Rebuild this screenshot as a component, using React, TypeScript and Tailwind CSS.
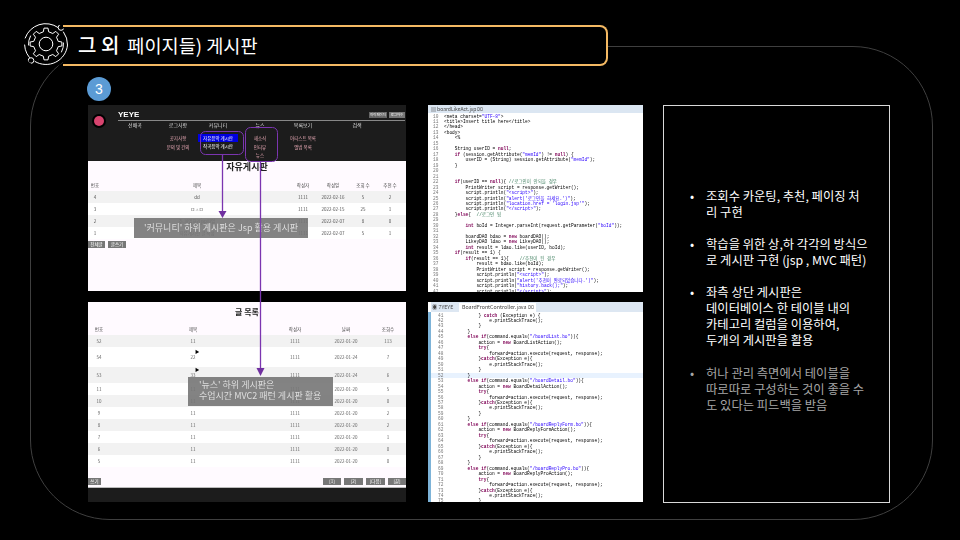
import React from 'react';

const code1: [string, string][] = [
  ['10', '<meta charset="UTF-8">'],
  ['11', '<title>Insert title here</title>'],
  ['12', '</head>'],
  ['13', '<body>'],
  ['14', '    <%'],
  ['15', ''],
  ['16', '    String userID = null;'],
  ['17', '    if (session.getAttribute("memId") != null) {'],
  ['18', '        userID = (String) session.getAttribute("memId");'],
  ['19', '    }'],
  ['20', ''],
  ['21', ''],
  ['22', '    if(userID == null){ //로그인이 안되을 경우'],
  ['23', '        PrintWriter script = response.getWriter();'],
  ['24', '        script.println("<script>");'],
  ['25', '        script.println("alert(\'로그인을 하세요.\')");'],
  ['26', '        script.println("location.href = \'login.jsp\'");'],
  ['27', '        script.println("</script>");'],
  ['28', '    }else{  //로그인 됨'],
  ['29', ''],
  ['30', '        int boId = Integer.parseInt(request.getParameter("boId"));'],
  ['31', ''],
  ['32', '        boardDAO bdao = new boardDAO();'],
  ['33', '        LikeyDAO ldao = new LikeyDAO();'],
  ['34', '        int result = ldao.like(userID, boId);'],
  ['35', '    if(result == 1) {'],
  ['36', '        if(result == 1){    //추천이 된 경우'],
  ['37', '            result = bdao.like(boId);'],
  ['38', '            PrintWriter script = response.getWriter();'],
  ['39', '            script.println("<script>");'],
  ['40', '            script.println("alert(\'추천이 완료되었습니다.\')");'],
  ['41', '            script.println("history.back();");'],
  ['42', '            script.println("</script>");'],
];

const blocks = [
  ['"/boardReplyForm.bo"', 'BoardReplyFormAction'],
  ['"/boardReplyPro.bo"', 'BoardReplyProAction'],
];

function tail(start: number): [string, string][] {
  const body = [
    '            try{',
    '                forward=action.execute(request, response);',
    '            }catch(Exception e){',
    '                e.printStackTrace();',
    '            }',
    '        }',
  ];
  return body.map((l, i) => [String(start + i), l]);
}

const code2: [string, string][] = [
  ['41', '            } catch (Exception e) {'],
  ['42', '                e.printStackTrace();'],
  ['43', '            }'],
  ['44', '        }'],
  ['45', '        else if(command.equals("/boardList.bo")){'],
  ['46', '            action = new BoardListAction();'],
  ...tail(47),
  ['53', '        else if(command.equals("/boardDetail.bo")){'],
  ['54', '            action = new BoardDetailAction();'],
  ...tail(55),
  ['61', `        else if(command.equals(${blocks[0][0]})){`],
  ['62', `            action = new ${blocks[0][1]}();`],
  ...tail(63),
  ['69', `        else if(command.equals(${blocks[1][0]})){`],
  ['70', `            action = new ${blocks[1][1]}();`],
  ...tail(71).slice(0, 4),
  ['75', '            }'],
];

// keywords, strings and comments get the Eclipse colours
function CodeText({ text }: { text: string }) {
  const parts = text.split(/(\/\/.*$|"[^"]*"|\b(?:new|if|else|try|catch|null|int)\b)/);
  return (
    <>
      {parts.map((p, i) => {
        if (p.startsWith('//')) return <span key={i} className="text-[#3f7f5f]">{p}</span>;
        if (p.startsWith('"')) return <span key={i} className="text-[#2a00ff]">{p}</span>;
        if (/^(new|if|else|try|catch|null|int)$/.test(p)) return <span key={i} className="font-bold text-[#7f0055]">{p}</span>;
        return <span key={i}>{p}</span>;
      })}
    </>
  );
}

function CodeLines({ lines, gutter, active }: { lines: [string, string][]; gutter: string; active?: string }) {
  return (
    <div className="blur-[0.3px] font-['Liberation_Mono','Noto_Sans_CJK_KR',monospace] text-[4.5px] leading-[5.48px] text-black">
      {lines.map(([n, t]) => (
        <div key={n} className={`flex h-[5.48px] whitespace-pre ${n === active ? 'bg-[#e8f2fe]' : ''}`}>
          <span className={`${gutter} shrink-0 text-[#787878]`}>{n}</span>
          <span><CodeText text={t} /></span>
        </div>
      ))}
    </div>
  );
}

function gearPath(cx: number, cy: number, outer: number, root: number, teeth: number) {
  const pts: string[] = [];
  const step = (Math.PI * 2) / teeth;
  for (let i = 0; i < teeth; i++) {
    const a = i * step - Math.PI / 2;
    const w = step * 0.2;
    const corners: [number, number][] = [
      [root, a - w * 1.35],
      [outer, a - w * 0.8],
      [outer, a + w * 0.8],
      [root, a + w * 1.35],
    ];
    corners.forEach(([r, t]) => {
      pts.push(`${(cx + r * Math.cos(t)).toFixed(2)} ${(cy + r * Math.sin(t)).toFixed(2)}`);
    });
  }
  return `M${pts.join('L')}Z`;
}

function GearLogo() {
  return (
    <svg width="48" height="48" viewBox="0 0 48 48" fill="none" stroke="#fff" strokeWidth="1" className="relative z-10 shrink-0 bg-black rounded-full">
      <path d={gearPath(24, 23, 16, 12.5, 8)} strokeLinejoin="round" />
      <circle cx="24" cy="23" r="6.8" />
      <path d="M36 6.5A21.5 21.5 0 0 0 3.2 17" strokeLinecap="round" />
      <path d="M2.6 24A21.5 21.5 0 0 0 10.5 39.5" strokeLinecap="round" />
      <path d="M13 40.5A21.5 21.5 0 0 0 45.5 24A21.5 21.5 0 0 0 41.5 11" strokeLinecap="round" />
      <path d="M6.5 24A17.5 17.5 0 0 1 8.5 15" strokeLinecap="round" />
      <path d="M41.5 22A17.5 17.5 0 0 1 39.5 31" strokeLinecap="round" />
      <circle cx="39" cy="6.5" r="2.8" fill="#000" />
      <circle cx="9" cy="39.5" r="2.8" fill="#000" />
    </svg>
  );
}

const freeRows = [
  ['4', 'dd', '1111', '2022-02-16', '5', '2'],
  ['3', 'ㅁㅅㅁ', '1111', '2022-02-15', '25', '1'],
  ['2', '추.파일처리jsp파일', '1111', '2022-02-07', '8', '0'],
  ['1', '자유게시판 글 작성', '1111', '2022-02-07', '5', '1'],
];

const listRows: { cells: string[]; h: string; tri?: boolean }[] = [
  { cells: ['52', '11', '1111', '2022-01-20', '113'], h: 'h-[12px]' },
  { cells: ['54', '22', '1111', '2022-01-24', '7'], h: 'h-[20px]', tri: true },
  { cells: ['53', '33', '1111', '2022-01-24', '6'], h: 'h-[16px]', tri: true },
  { cells: ['11', '11', '1111', '2022-01-20', '5'], h: 'h-[12px]' },
  { cells: ['10', '11', '1111', '2022-01-20', '0'], h: 'h-[12px]' },
  { cells: ['9', '11', '1111', '2022-01-20', '2'], h: 'h-[12px]' },
  { cells: ['8', '11', '1111', '2022-01-20', '2'], h: 'h-[12px]' },
  { cells: ['7', '11', '1111', '2022-01-20', '1'], h: 'h-[12px]' },
  { cells: ['6', '11', '1111', '2022-01-20', '0'], h: 'h-[12px]' },
  { cells: ['5', '11', '1111', '2022-01-20', '0'], h: 'h-[12px]' },
];

function FreeBoardShot() {
  return (
    <div className="h-[186px] overflow-hidden bg-[#fffaff]">
      <div className="blur-[0.45px]">
        <div className="h-[56px] bg-[#1c1c1c] flex flex-col text-white">
          <div className="h-[16px] flex items-end pl-[6px] pr-[1px]">
            <div className="w-[10px] h-[10px] rounded-full bg-[#d8446f] -mb-[5px] ring-2 ring-black shrink-0" />
            <div className="flex-1 ml-[14px] border-b border-[#888] flex justify-between items-end h-[12px]">
              <span className="text-[8px] leading-[10px] font-bold font-['Liberation_Sans',sans-serif]">YEYE</span>
              <div className="flex gap-[2px] mb-[2px]">
                <span className="w-[18px] h-[6px] bg-[#666] text-[3.4px] leading-[6px] text-center whitespace-nowrap">마이페이지</span>
                <span className="w-[16px] h-[6px] bg-[#777] text-[3.4px] leading-[6px] text-center whitespace-nowrap">로그아웃</span>
              </div>
            </div>
          </div>
          <div className="grid grid-cols-[34px_52px_28px_56px_30px_78px] ml-[30px] text-center whitespace-nowrap text-[5px] leading-[8px] text-[#ddd]">
            <span>선배곡</span>
            <span>로그사항</span>
            <span>커뮤니티</span>
            <span>뉴스</span>
            <span>목록보기</span>
            <span>검색</span>
          </div>
          <div className="grid grid-cols-[34px_52px_28px_56px_30px_78px] ml-[30px] mt-[5px] text-center whitespace-nowrap text-[4.5px] leading-[8.5px] text-[#e6a8b4]">
            <span />
            <div className="flex flex-col">
              <span>공지사항</span>
              <span>문의 및 건의</span>
            </div>
            <div className="flex flex-col -mx-[6px] text-white">
              <span className="bg-[#0000e0] leading-[8px]">자유음악 게시판</span>
              <span>작곡음악 게시판</span>
            </div>
            <div className="flex flex-col">
              <span>새소식</span>
              <span>인터뷰</span>
              <span>뉴스</span>
            </div>
            <div className="flex flex-col">
              <span>아티스트 목록</span>
              <span>앨범 목록</span>
            </div>
            <span />
          </div>
        </div>
        <div className="text-center text-[9px] leading-[12px] font-bold text-[#222]">자유게시판</div>
        <div className="grid grid-cols-[14px_190px_22px_38px_22px_32px] mt-[6px] h-[12px] items-center text-center whitespace-nowrap text-[4.5px] text-[#444]">
          {['번호', '제목', '작성자', '작성일', '조회 수', '추천 수'].map((h) => <span key={h}>{h}</span>)}
        </div>
        {freeRows.map((r, i) => (
          <div key={r[0]} className={`grid grid-cols-[14px_190px_22px_38px_22px_32px] h-[12px] items-center text-center whitespace-nowrap text-[4.5px] text-[#555] ${i % 2 === 0 ? 'bg-[#f2f2f2]' : 'bg-white'}`}>
            {r.map((c, j) => <span key={j}>{c}</span>)}
          </div>
        ))}
        <div className="flex gap-[3px] mt-[2px] text-[4.5px] leading-[7px] text-white text-center">
          <span className="w-[17px] bg-[#777]">전체글</span>
          <span className="w-[18px] bg-[#777]">글쓰기</span>
        </div>
      </div>
    </div>
  );
}

function ListBoardShot() {
  return (
    <div className="h-[200px] overflow-hidden bg-[#fffaff] flex flex-col">
      <div className="blur-[0.45px] flex-1 flex flex-col">
        <div className="text-center text-[8px] leading-[12px] font-bold text-[#222] mt-[4px]">글 목록</div>
        <div className="grid grid-cols-[22px_166px_38px_64px_20px] mt-[5px] h-[12px] items-center text-center whitespace-nowrap text-[4.5px] text-[#444]">
          {['번호', '제목', '작성자', '날짜', '조회수'].map((h) => <span key={h}>{h}</span>)}
        </div>
        {listRows.map((r, i) => (
          <div key={r.cells[0]} className={`grid grid-cols-[22px_166px_38px_64px_20px] ${r.h} items-center text-center whitespace-nowrap text-[4.5px] text-[#666] ${i % 2 === 0 ? 'bg-[#f2f2f2]' : 'bg-white'}`}>
            {r.cells.map((c, j) => (
              <span key={j} className="relative">
                {c}
                {j === 1 && r.tri && <span className="absolute left-[85px] -top-[6px] text-[4.5px] text-black">▶</span>}
              </span>
            ))}
          </div>
        ))}
        <div className="flex-1 flex items-end justify-between pb-[2px] text-[4.5px] leading-[7px] text-white text-center">
          <span className="w-[13px] bg-[#777]">쓰기</span>
          <div className="flex gap-[3px]">
            <span className="w-[18px] bg-[#777]">[1]</span>
            <span className="w-[19px] bg-[#777]">[2]</span>
            <span className="w-[19px] bg-[#777]">[다음]</span>
            <span className="w-[18px] bg-[#777]">[끝]</span>
          </div>
        </div>
        <div className="h-[15px] bg-[#1c1c1c] border-t border-[#bbb]" />
      </div>
    </div>
  );
}

function LeftColumn() {
  return (
    <div className="relative w-[318px] flex flex-col gap-[11px]">
      <FreeBoardShot />
      <ListBoardShot />
      <div className="absolute left-[46px] top-[113px] w-[174px] h-[20px] bg-[#767676]/90 text-[#dedede] text-[9px] leading-[20px] text-center whitespace-nowrap blur-[0.25px]">
        '커뮤니티' 하위 게시판은 Jsp 활용 게시판
      </div>
      <div className="absolute left-[100px] top-[272px] w-[145px] h-[29px] bg-[#767676]/90 text-[#dedede] text-[9px] leading-[11px] pl-[11px] pt-[2px] whitespace-nowrap blur-[0.25px]">
        '뉴스' 하위 게시판은
        <br />
        수업시간 MVC2 패턴 게시판 활용
      </div>
      <svg className="absolute inset-0 pointer-events-none" width="318" height="397" fill="none" stroke="#7b35b0">
        <rect x="112.5" y="26.5" width="43" height="23" rx="5" />
        <rect x="157.5" y="22.5" width="32" height="34" rx="5" />
        <path d="M134.5 50V108M172.5 56V265" strokeWidth="1.3" />
        <path d="M130.5 106L138.5 106L134.5 113Z M168.5 263L176.5 263L172.5 271Z" fill="#7030a0" stroke="none" />
      </svg>
    </div>
  );
}

function CodeColumn() {
  return (
    <div className="w-[215px] flex flex-col gap-[10px]">
      <div className="h-[187px] overflow-hidden bg-white">
        <div className="h-[8px] bg-[#dbe6f2] flex items-center pl-[3px] text-[5px] text-[#444] blur-[0.3px] whitespace-nowrap">▤ boardLikeAct.jsp ⌧</div>
        <div className="pt-[0.5px]">
          <CodeLines lines={code1} gutter="w-[16px] pl-[5px]" />
        </div>
      </div>
      <div className="h-[200px] overflow-hidden bg-white flex">
        <div className="w-[3px] mt-[10px] bg-[#7db3d8] shrink-0" />
        <div className="flex-1 min-w-0">
          <div className="h-[10px] flex items-end bg-[#dde7f2] text-[5.3px] leading-[9px] text-[#444] blur-[0.3px] whitespace-nowrap">
            <span className="w-[28px] pl-[1px]">◉ 7YEYE</span>
            <span className="w-[77px] bg-white pl-[3px]">BoardFrontController.java ⌧</span>
          </div>
          <div className="pt-[0.5px]">
            <CodeLines lines={code2} gutter="w-[15px] pl-[7px]" active="52" />
          </div>
        </div>
      </div>
    </div>
  );
}

function NoteItem({ lines, tone }: { lines: string[]; tone?: string }) {
  return (
    <div className={`flex ${tone ?? 'text-white'}`}>
      <span className="w-[16px] shrink-0">•</span>
      <p>
        {lines.map((l, i) => (
          <span key={i} className="block whitespace-nowrap">{l}</span>
        ))}
      </p>
    </div>
  );
}

export default function App() {
  return (
    <div className="relative w-[960px] h-[540px] bg-black overflow-hidden font-['Noto_Sans_CJK_KR',sans-serif] text-white">
      {/* big rounded frame behind the slide */}
      <div className="absolute left-[30px] top-[46px] w-[903px] h-[474px] rounded-[80px] border border-[#3f3f3f]" />

      <div className="relative pl-[22px] pt-[21px]">
        <div className="flex items-center">
          <GearLogo />
          <div className="w-[545px] h-[41px] -ml-[7px] bg-black border-2 border-l-0 border-[#f4b963] rounded-r-lg pl-[15px] flex items-center whitespace-nowrap">
            <span className="text-[20px] font-medium">그 외</span>
            <span className="text-[18.6px] ml-[8px]">페이지들) 게시판</span>
          </div>
        </div>

        <div className="ml-[65px] mt-[8px] w-[24px] h-[24px] rounded-full bg-[#5b9bd5] flex items-center justify-center text-[14px] leading-none font-['Liberation_Sans',sans-serif]">3</div>

        <div className="ml-[66px] mt-[4px] flex items-start">
          <LeftColumn />
          <div className="ml-[22px]">
            <CodeColumn />
          </div>
          <div className="ml-[20px] w-[227px] h-[398px] border border-[#d9d9d9] pl-[26px] pt-[82px] flex flex-col gap-[16px] text-[12.3px] leading-[16px]">
            <NoteItem lines={['조회수 카운팅, 추천, 페이징 처', '리 구현']} />
            <NoteItem lines={['학습을 위한 상,하 각각의 방식으', '로 게시판 구현 (jsp , MVC 패턴)']} />
            <NoteItem lines={['좌측 상단 게시판은', '데이터베이스 한 테이블 내의', '카테고리 컬럼을 이용하여,', '두개의 게시판을 활용']} />
            <NoteItem tone="text-[#a6a6a6] mt-[1px]" lines={['허나 관리 측면에서 테이블을', '따로따로 구성하는 것이 좋을 수', '도 있다는 피드백을 받음']} />
          </div>
        </div>
      </div>
    </div>
  );
}
